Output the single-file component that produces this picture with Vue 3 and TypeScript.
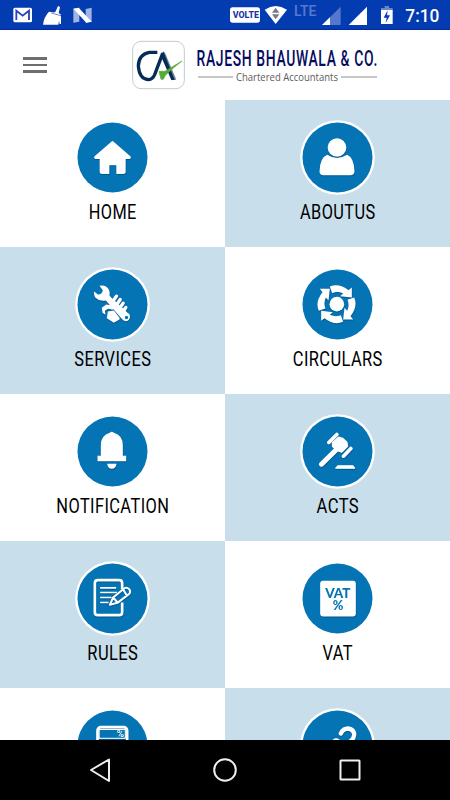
<script setup lang="ts">
interface Tile {
  label: string
  icon: string
  width: number
  cx: number
  cy: number
}

const tiles: Tile[] = [
  { label: 'HOME', icon: 'home', width: 48, cx: 158, cy: 143 },
  { label: 'ABOUTUS', icon: 'person', width: 75.5, cx: 172, cy: 142 },
  { label: 'SERVICES', icon: 'services', width: 77, cx: 158, cy: 133 },
  { label: 'CIRCULARS', icon: 'circulars', width: 90, cx: 172, cy: 133 },
  { label: 'NOTIFICATION', icon: 'bell', width: 113, cx: 187, cy: 140 },
  { label: 'ACTS', icon: 'gavel', width: 42.5, cx: 172, cy: 140 },
  { label: 'RULES', icon: 'rules', width: 51, cx: 158, cy: 131 },
  { label: 'VAT', icon: 'vat', width: 30.5, cx: 172, cy: 131 },
  { label: '', icon: 'calculator', width: 0, cx: 187, cy: 183 },
  { label: '', icon: 'query', width: 0, cx: 862, cy: 183 },
]

const shaded = (i: number): boolean => i % 4 === 1 || i % 4 === 2
</script>

<template>
  <div class="screen">
    <div class="status">
      <svg class="status-left" width="100" height="30" viewBox="0 0 300 90">
        <rect x="40" y="23" width="56" height="44" rx="5" fill="#fff" />
        <path d="M49 60V32L68 47 87 32V60" fill="none" stroke="#2a45b5" stroke-width="5.5" />
        <path d="M174 18l6 3-4 18 8 6-26 0 2-6 6-3z" fill="#fff" />
        <path d="M147 35L171 39 183 48V72H179L177 63 175 74H129Q132 50 147 35z" fill="#fff" />
        <path d="M154 39L182 47" stroke="#6d8ad2" stroke-width="3" />
        <path d="M220 26l18-3v42l-18 3zM257 27l18-4v42l-18 3z" fill="#9fb4e2" />
        <path d="M220 26l16-3 39 42-16 3z" fill="#fff" />
      </svg>
      <svg class="status-right" width="225" height="30" viewBox="0 0 675 90">
        <rect x="15" y="22" width="90" height="46" rx="8" fill="#fff" />
        <text class="volte" x="23" y="54.500" textLength="79" lengthAdjust="spacingAndGlyphs">VOLTE</text>
        <path d="M119 29Q152 7 186 29L152 72z" fill="#fff" />
        <path d="M141 38l11-15 11 15zM141 43h22l-11 15z" fill="#767b83" />
        <text class="lte" x="207" y="48" textLength="67" lengthAdjust="spacingAndGlyphs">LTE</text>
        <path d="M347 20V75H291z" fill="#5478cb" />
        <path d="M315 52V75H291z" fill="#fff" />
        <path d="M426 20V75H371z" fill="#fff" />
        <path d="M479 18h13v6h11v8h-35v-8h11z" fill="#6585cf" />
        <path d="M468 30h35v42h-35z" fill="#fff" />
        <path d="M488 31l-12 22h9l-3 16 13-23h-9z" fill="#033bb0" />
        <text class="clock" x="541" y="65" textLength="102" lengthAdjust="spacingAndGlyphs">7:10</text>
      </svg>
    </div>

    <header class="header">
      <div class="menu"><span></span><span></span><span></span></div>
      <svg class="logo" width="54" height="50" viewBox="0 0 162 150">
        <rect x="5" y="4" width="155" height="142" rx="25" fill="#fff" stroke="#c5cbce" stroke-width="3" />
        <path
          d="M79 37H55Q23 43 22 78 25 118 53 119 65 118 71 104L95 40 128 119"
          fill="none"
          stroke="#062b57"
          stroke-width="10"
          stroke-linejoin="bevel"
        />
        <path d="M101 36L136 119H126L94 45z" fill="#708292" />
        <path d="M97 34L131 120H121L90 49z" fill="#062b57" />
        <path d="M84 94H102L153 63 127 84 103 106 97 118H90z" fill="#55aa35" stroke="#55aa35" stroke-width="2" />
      </svg>
      <div class="brand">
        <svg width="184" height="25" viewBox="0 0 184 25">
          <text class="brand-name" x="0.500" y="20.700" textLength="181.500" lengthAdjust="spacingAndGlyphs">RAJESH BHAUWALA &amp; CO.</text>
        </svg>
        <svg width="184" height="16" viewBox="0 0 184 16">
          <path d="M2 7H37M145 7H181" stroke="#b5b5b5" stroke-width="1.3" />
          <text class="brand-sub" x="40" y="10.700" textLength="102" lengthAdjust="spacingAndGlyphs">Chartered Accountants</text>
        </svg>
      </div>
    </header>

    <main class="grid">
      <div v-for="(t, i) in tiles" :key="t.icon" class="tile" :class="{ shaded: shaded(i) }">
        <svg class="badge" width="75" height="75" viewBox="-112.5 -112.5 225 225">
          <circle r="112" fill="#fff" />
          <circle r="105" fill="#0474b5" />
          <g class="glyph" :transform="`translate(${-t.cx} ${-t.cy})`">
            <path
              v-if="t.icon === 'home'"
              d="M158 96L210 141Q212 145 206 145H195V185Q195 190 190 190H172V164H146V190H127Q122 190 122 185V145H110Q104 145 106 141z"
              stroke="#fff"
              stroke-width="5"
              stroke-linejoin="round"
            />
            <template v-else-if="t.icon === 'person'">
              <path d="M141 134Q170 153 201 134 222 143 223 184 222 195 211 195H130Q118 195 118 184 119 143 141 134z" />
              <circle cx="170.500" cy="112" r="28" />
            </template>
            <template v-else-if="t.icon === 'services'">
              <path d="M119 77Q137 72 147 88 151 99 149 107L208 161Q214 173 205 181 196 187 187 177L138 121Q119 125 107 113 101 105 103 94L114 103Q126 104 129 91z" />
              <circle cx="200" cy="172" r="5" fill="#0474b5" />
              <path d="M153 109L206 159" stroke="#0474b5" stroke-width="3" />
              <g stroke="#fff" stroke-width="10" stroke-linecap="round">
                <path d="M170 108l-7 10M181 118l-8 12M190 129l-8 12M198 142l-6 9" />
              </g>
              <path d="M126 143L139 133 152 135 164 144 158 149 145 146 135 152 137 164 128 158z" />
              <path d="M144 154L162 151 179 173 179 178 162 188 141 174z" />
            </template>
            <template v-else-if="t.icon === 'circulars'">
              <circle cx="170" cy="132" r="22" />
              <g v-for="r in [0, 90, 180, 270]" :key="r" :transform="`rotate(${r} 169 132)`">
                <path d="M149 79Q176 67 205 90L215 82V112L180 108 189 100Q172 92 156 99z" />
              </g>
            </template>
            <template v-else-if="t.icon === 'bell'">
              <path d="M179 84Q185 78 191 84 218 92 218 121V153H228V169H142V153H152V121Q152 92 179 84z" />
              <path d="M171 177H199Q197 192 185 192T171 177z" />
            </template>
            <g v-else-if="t.icon === 'gavel'" stroke="#fff" stroke-linecap="round" stroke-linejoin="round">
              <path d="M170 89L146 113M212 131L190 154" stroke-width="11" />
              <path d="M175 97L188 101 200 112 202 124 184 142 169 136 157 124 157 113z" stroke-width="4" />
              <path d="M169 134L124 178" stroke-width="15" />
              <path d="M167 190L174 183H218L223 190z" stroke-width="4" />
            </g>
            <g v-else-if="t.icon === 'rules'" fill="none" stroke="#fff" stroke-linejoin="round">
              <path d="M187 103V85Q187 76 178 76H114Q105 76 105 85V172Q105 181 114 181H178Q187 181 187 172V143" stroke-width="8" />
              <path d="M121 99H169M121 113H171M121 128H155M121 143H146" stroke-width="5" />
              <path d="M150 150L160 128 194 100Q201 96 208 103 214 112 207 118L173 144zM160 128L173 143M190 104L201 122" stroke-width="6" />
            </g>
            <template v-else-if="t.icon === 'vat'">
              <rect x="120" y="78" width="107" height="107" rx="9" />
              <g class="vat-text">
                <text x="135" y="129" textLength="76" lengthAdjust="spacingAndGlyphs">VAT</text>
                <text x="158" y="165" textLength="32" lengthAdjust="spacingAndGlyphs">%</text>
              </g>
            </template>
            <template v-else-if="t.icon === 'calculator'">
              <rect x="142" y="128" width="89" height="115" rx="10" fill="none" stroke="#fff" stroke-width="8" />
              <rect x="147" y="135" width="78" height="26" fill="none" stroke="#fff" stroke-width="4" />
              <rect x="149" y="137" width="74" height="22" fill="#0474b5" />
              <text class="calc-text" x="200" y="158" textLength="22" lengthAdjust="spacingAndGlyphs">%</text>
            </template>
            <template v-else>
              <path d="M872 147Q879 132 894 132 912 135 912 151 911 164 895 175V191" fill="none" stroke="#fff" stroke-width="13" stroke-linecap="round" />
              <circle cx="858" cy="174" r="13" />
            </template>
          </g>
        </svg>
        <svg v-if="t.label" class="label" width="225" height="26" viewBox="0 0 225 26">
          <text :x="112.8 - t.width / 2" y="20" :textLength="t.width" lengthAdjust="spacingAndGlyphs">{{ t.label }}</text>
        </svg>
      </div>
    </main>

    <nav class="nav">
      <svg width="450" height="60" viewBox="0 0 450 60" fill="none" stroke="#eee" stroke-width="2" stroke-linejoin="round">
        <path d="M109 19.500V41L91 30z" />
        <circle cx="225" cy="30" r="10.800" />
        <rect x="340.500" y="20.500" width="19" height="19" rx="0.500" />
      </svg>
    </nav>
  </div>
</template>

<style>
body {
  margin: 0;
  overflow: hidden;
}
</style>

<style scoped>
.screen {
  width: 450px;
  height: 800px;
  display: flex;
  flex-direction: column;
  overflow: hidden;
  background: #fff;
  font-family: Roboto, "Liberation Sans", sans-serif;
}
svg {
  display: block;
  flex: none;
}
.status {
  box-sizing: border-box;
  height: 30px;
  flex: none;
  display: flex;
  justify-content: space-between;
  background: #033bb0;
  border-bottom: 1px solid #0828a0;
}
.volte {
  font-size: 27px;
  font-weight: 800;
  fill: #1735a5;
}
.lte {
  font-size: 42px;
  font-weight: 600;
  fill: #5478cb;
}
.clock {
  font-size: 54px;
  font-weight: 500;
  fill: #fff;
}
.header {
  height: 70px;
  flex: none;
  display: flex;
  align-items: flex-start;
}
.menu {
  display: flex;
  flex-direction: column;
  gap: 4px;
  width: 24px;
  margin: 27px 84px 0 23px;
}
.menu span {
  height: 2.500px;
  background: #6e6e6e;
}
.logo {
  margin-top: 10px;
}
.brand {
  display: flex;
  flex-direction: column;
  margin: 15px 0 0 11px;
}
.brand svg {
  overflow: visible;
}
.brand-name {
  font-size: 22px;
  font-weight: 500;
  letter-spacing: 1px;
  fill: #060c61;
}
.brand-sub {
  font-family: "Open Sans", "Noto Sans", sans-serif;
  font-size: 11px;
  fill: #5c5c5c;
}
.grid {
  height: 640px;
  flex: none;
  display: grid;
  grid-template-columns: 225px 225px;
  grid-auto-rows: 147px;
  overflow: hidden;
}
.tile {
  display: flex;
  flex-direction: column;
  align-items: center;
  padding-top: 20px;
  box-sizing: border-box;
  background: #fff;
}
.shaded {
  background: #c9deeb;
}
.glyph {
  fill: #fff;
  filter: drop-shadow(1px 3px 1.500px rgba(0, 40, 80, 0.4));
}
.vat-text {
  font-family: Lato, sans-serif;
  font-size: 42px;
  font-weight: 900;
  fill: #0474b5;
}
.calc-text {
  font-size: 26px;
  font-weight: 500;
}
.label {
  margin-top: 4px;
  font-size: 20px;
  letter-spacing: 0.500px;
  fill: #000;
}
.nav {
  height: 60px;
  flex: none;
  background: #000;
}
</style>
